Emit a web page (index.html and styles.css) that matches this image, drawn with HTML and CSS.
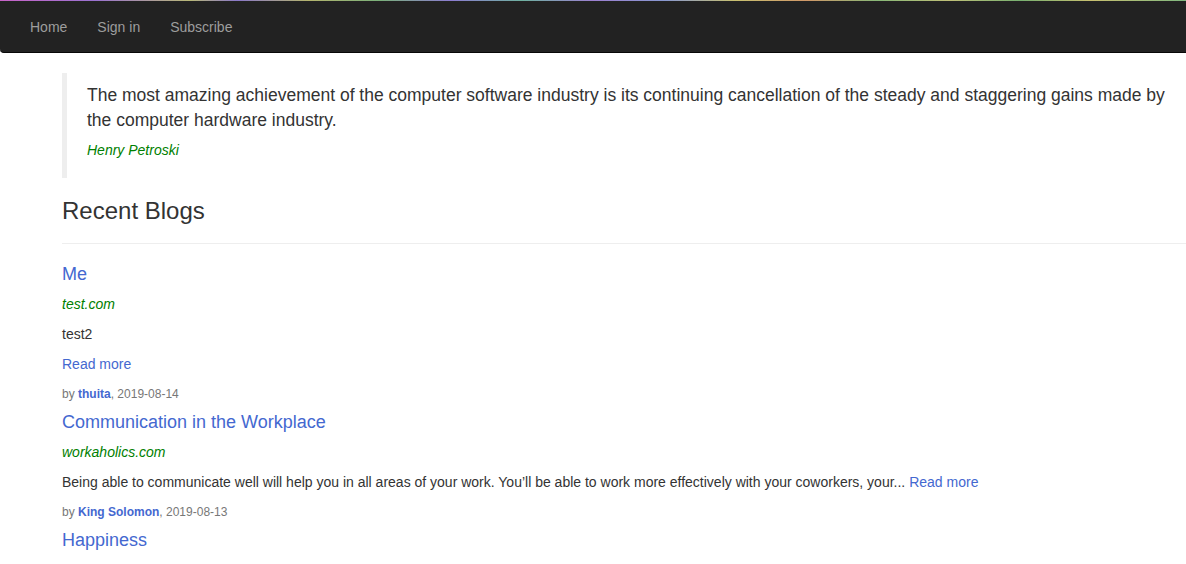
FILE: index.html
```html
<!DOCTYPE html>
<html>
<head>
<meta charset="utf-8">
<title>Blog</title>
<link rel="stylesheet" href="styles.css">
</head>
<body>
<div class="topline"></div>
<nav class="navbar">
  <a class="nav-link" href="#">Home</a>
  <a class="nav-link" href="#">Sign in</a>
  <a class="nav-link" href="#">Subscribe</a>
</nav>
<main class="content">
  <blockquote class="quote">
    <p>The most amazing achievement of the computer software industry is its continuing cancellation of the steady and staggering gains made by the computer hardware industry.</p>
    <footer class="quote-author">Henry Petroski</footer>
  </blockquote>
  <div class="page-header">
    <h3>Recent Blogs</h3>
  </div>
  <article class="post">
    <h4 class="post-title"><a href="#">Me</a></h4>
    <p class="post-source">test.com</p>
    <p class="post-desc">test2</p>
    <p class="post-desc"><a href="#">Read more</a></p>
    <div class="byline">by <a class="author" href="#">thuita</a>, 2019-08-14</div>
  </article>
  <article class="post">
    <h4 class="post-title"><a href="#">Communication in the Workplace</a></h4>
    <p class="post-source">workaholics.com</p>
    <p class="post-desc">Being able to communicate well will help you in all areas of your work. You’ll be able to work more effectively with your coworkers, your... <a href="#">Read more</a></p>
    <div class="byline">by <a class="author" href="#">King Solomon</a>, 2019-08-13</div>
  </article>
  <article class="post">
    <h4 class="post-title"><a href="#">Happiness</a></h4>
  </article>
</main>
</body>
</html>
```
FILE: styles.css
```css
html, body {
  margin: 0;
  padding: 0;
}
body {
  font-family: "Liberation Sans", Arial, sans-serif;
  font-size: 14px;
  line-height: 20px;
  color: #333;
  background: #fff;
  overflow: hidden;
}
a {
  color: #4468d0;
  text-decoration: none;
}
.topline {
  height: 1px;
  background: linear-gradient(90deg, #c864c8 0%, #9a72d0 8%, #b8b878 16%, #8a78c8 20%, #b4b46e 26%, #7ab07a 32%, #8c7cd0 38%, #6fb0a0 44%, #9c80d0 50%, #8898d0 56%, #c8c070 62%, #d09868 68%, #88b878 74%, #c0c078 80%, #78b070 86%, #c8c070 92%, #80b880 100%);
}
.navbar {
  display: flex;
  align-items: center;
  height: 51px;
  padding: 0 15px;
  background: #222;
  border-bottom: 1px solid #080808;
  border-bottom-left-radius: 4px;
}
.nav-link {
  color: #9d9d9d;
  padding: 15px;
  line-height: 20px;
}
.content {
  padding: 20px 0 0 62px;
}
.quote {
  margin: 0;
  padding: 10px 10px 18px 20px;
  border-left: 5px solid #eee;
  font-size: 17.5px;
  line-height: 25px;
}
.quote p {
  margin: 0 0 7px;
}
.quote-author {
  font-size: 14px;
  line-height: 20px;
  font-style: italic;
  color: #008000;
}
.page-header {
  margin: 0 0 20px;
  padding-bottom: 9px;
  border-bottom: 1px solid #eee;
}
.page-header h3 {
  margin: 20px 0 10px;
  font-size: 24px;
  line-height: 26px;
  font-weight: 500;
  color: #333;
}
.post-title {
  margin: 8px 0 10px;
  font-size: 18px;
  line-height: 20px;
  font-weight: 500;
}
.post:first-of-type .post-title {
  margin-top: 0;
}
.post-source {
  margin: 0 0 10px;
  font-style: italic;
  color: #008000;
}
.post-desc {
  margin: 0 0 10px;
}
.byline {
  margin-top: 2px;
  font-size: 12px;
  line-height: 20px;
  color: #777;
}
.author {
  font-weight: bold;
}
```
